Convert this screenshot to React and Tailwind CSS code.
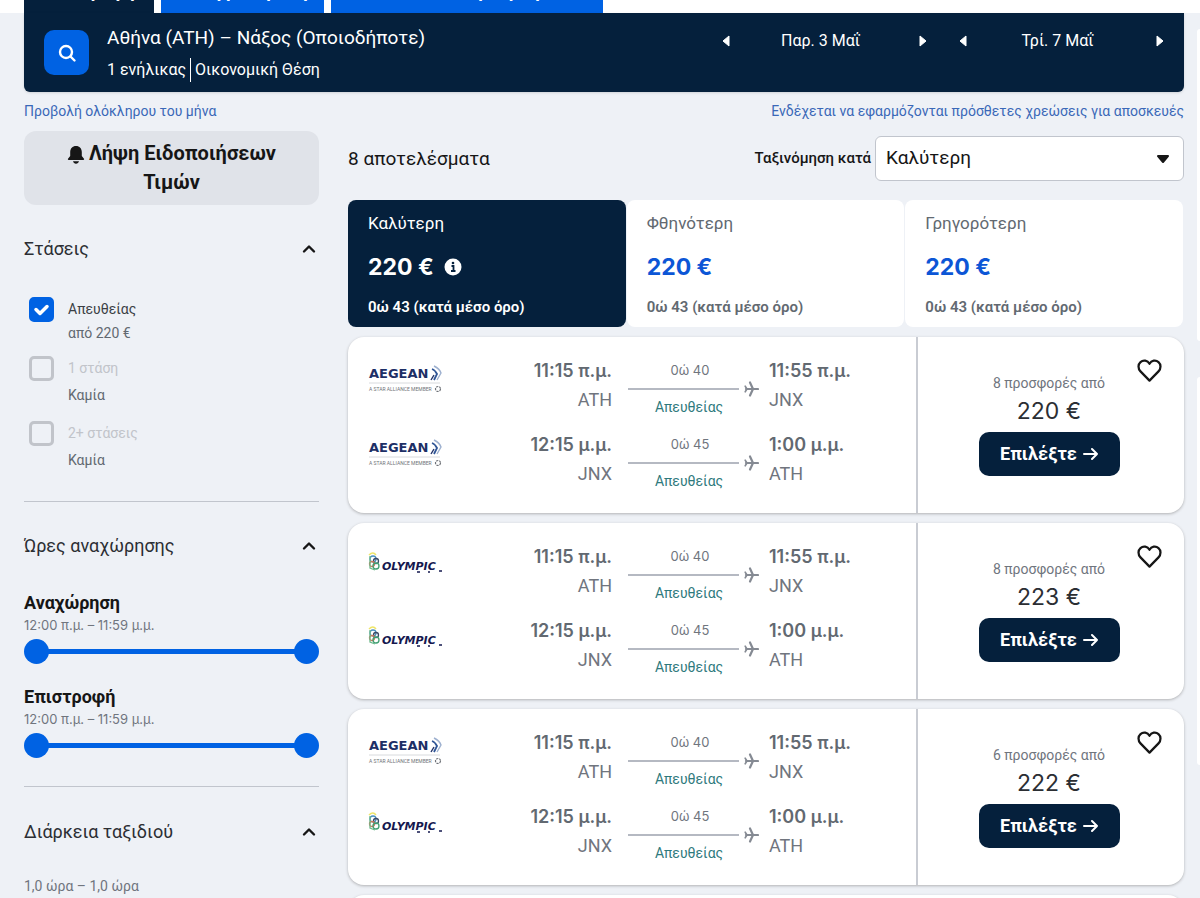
import React, { useState } from 'react';

const legs = {
    out: { depart: '11:15 π.μ.', from: 'ATH', duration: '0ώ 40', arrive: '11:55 π.μ.', to: 'JNX' },
    back: { depart: '12:15 μ.μ.', from: 'JNX', duration: '0ώ 45', arrive: '1:00 μ.μ.', to: 'ATH' },
};

const results = [
    { id: 1, airlines: ['aegean', 'aegean'], deals: '8 προσφορές από', price: '220 €' },
    { id: 2, airlines: ['olympic', 'olympic'], deals: '8 προσφορές από', price: '223 €' },
    { id: 3, airlines: ['aegean', 'olympic'], deals: '6 προσφορές από', price: '222 €' },
];

const sortTabs = ['Καλύτερη', 'Φθηνότερη', 'Γρηγορότερη'];

const stops = [
    { id: 'direct', label: 'Απευθείας', note: 'από 220 €' },
    { id: 'one', label: '1 στάση', note: 'Καμία', disabled: true },
    { id: 'two', label: '2+ στάσεις', note: 'Καμία', disabled: true },
];

const AegeanLogo = () => (
    <svg width="74" height="32" viewBox="0 0 74 32" role="img" aria-label="Aegean">
        <text x="1" y="14" fontSize="13" fontWeight="700" fill="#1d2f66" fontFamily="DejaVu Sans, sans-serif">AEGEAN</text>
        <path d="M66 2c4 2 6 4 7 7l-4 7" fill="none" stroke="#9db0cf" strokeWidth="1.4" />
        <path d="M64 5c3 1 4 3 5 5l-3 6" fill="none" stroke="#2f5596" strokeWidth="1.8" />
        <path d="m63 16 3-5" fill="none" stroke="#1d2f66" strokeWidth="1.4" />
        <path d="M1 19h71" stroke="#d8dadd" strokeWidth="1" />
        <text x="1" y="27" fontSize="5" fill="#6f7278" fontFamily="Roboto, sans-serif">A STAR ALLIANCE MEMBER</text>
        <circle cx="70" cy="25" r="2.500" fill="none" stroke="#6f7278" strokeWidth="1.2" strokeDasharray="2.200 1" />
    </svg>
);

const OlympicLogo = () => (
    <svg width="76" height="32" viewBox="0 0 76 32" role="img" aria-label="Olympic">
        <path d="M1 5q4-4 7 0" fill="none" stroke="#efe66a" strokeWidth="1.5" />
        <g fill="none" strokeWidth="1.3">
            <circle cx="5" cy="9" r="3" stroke="#4a8fc0" />
            <circle cx="8" cy="11" r="2.5" stroke="#3a4a66" />
            <circle cx="4" cy="14" r="2.5" stroke="#c9785c" />
            <circle cx="8" cy="16" r="3" stroke="#3f9f72" />
            <path d="M2 6v12l5 2" stroke="#6cb98b" />
        </g>
        <text x="14" y="20" fontSize="11" fontWeight="700" fontStyle="italic" fill="#15184f" fontFamily="DejaVu Sans, sans-serif">OLYMPIC</text>
        <path d="M49 22h3M60 22h2M71 21h3" stroke="#15184f" strokeWidth="1.3" />
    </svg>
);

const Bell = () => (
    <svg width="18" height="18" viewBox="0 0 18 18" className="mr-1 inline-block" fill="#161616" aria-hidden="true">
        <path d="M9 0C5.500 0 3.200 2.600 3.200 6v4L1 12.800c-.4.6 0 1.200.6 1.200h14.800c.6 0 1-.6.6-1.200L14.800 10V6c0-3.400-2.300-6-5.800-6zM6 15.200h6c-.4 1.600-1.500 2.500-3 2.500s-2.600-.9-3-2.500z" />
    </svg>
);

const Plane = () => (
    <svg width="15" height="16" viewBox="0 0 15 16" fill="none" stroke="#858a93" strokeLinecap="round" aria-hidden="true">
        <path d="M2 8h12" strokeWidth="2.2" />
        <path d="M9 8 6 1.500M9 8l-3 6.500" strokeWidth="2.200" />
        <path d="M3 8 1.200 5.200M3 8l-1.800 2.800" strokeWidth="1.6" />
    </svg>
);

const Chevron = () => (
    <svg width="14" height="10" viewBox="0 0 14 10" aria-hidden="true">
        <path d="M2 7.5 7 2.5l5 5" fill="none" stroke="#161616" strokeWidth="2.4" strokeLinecap="round" strokeLinejoin="round" />
    </svg>
);

const Arrow = ({ flip }) => (
    <svg width="8" height="12" viewBox="0 0 8 12" aria-hidden="true">
        <path d={flip ? 'M1 1v10l6-5z' : 'M7 1v10L1 6z'} fill="#fff" stroke="#fff" strokeLinejoin="round" />
    </svg>
);

const DatePicker = ({ date }) => (
    <div className="flex w-[205px] items-center justify-between">
        <button type="button" aria-label="Προηγούμενη ημέρα"><Arrow /></button>
        <span className="pr-2 text-base">{date}</span>
        <button type="button" aria-label="Επόμενη ημέρα"><Arrow flip /></button>
    </div>
);

const SectionTitle = ({ children }) => (
    <h2>
        <button type="button" className="flex w-full items-center justify-between pr-[3px] text-lg leading-6 text-[#2b2e33]">
            {children}
            <Chevron />
        </button>
    </h2>
);

const thumb =
    'pointer-events-none absolute inset-0 m-0 h-[25px] w-full appearance-none bg-transparent [&::-webkit-slider-thumb]:pointer-events-auto [&::-webkit-slider-thumb]:h-[25px] [&::-webkit-slider-thumb]:w-[25px] [&::-webkit-slider-thumb]:appearance-none [&::-webkit-slider-thumb]:rounded-full [&::-webkit-slider-thumb]:bg-[#0062e3]';

const TimeRange = ({ label }) => {
    const [from, setFrom] = useState(0);
    const [to, setTo] = useState(1439);

    return (
        <div>
            <h3 className="text-lg leading-6 font-bold text-[#161616]">{label}</h3>
            <p className="font-[Inter,sans-serif] text-[13px] leading-5 text-[#70757e]">12:00 π.μ. – 11:59 μ.μ.</p>
            <div className="relative mt-1 flex h-[25px] items-center">
                <div className="mx-3 h-[5px] flex-1 bg-[#0062e3]"></div>
                <input type="range" min="0" max="1439" value={from} onChange={(e) => setFrom(Number(e.target.value))} aria-label={`${label} από`} className={thumb} />
                <input type="range" min="0" max="1439" value={to} onChange={(e) => setTo(Number(e.target.value))} aria-label={`${label} έως`} className={thumb} />
            </div>
        </div>
    );
};

const Leg = ({ airline, leg }) => (
    <div className="flex h-[74px] items-start">
        <div className="flex-1 pt-[7px]">{airline === 'aegean' ? <AegeanLogo /> : <OlympicLogo />}</div>
        <div className="w-[100px] text-right">
            <p className="font-[Inter,sans-serif] text-lg leading-7 font-semibold text-[#626971]">{leg.depart}</p>
            <p className="text-lg leading-[30px] text-[#70757e]">{leg.from}</p>
        </div>
        <div className="ml-4 w-[131px]">
            <p className="w-[124px] text-center font-[Inter,sans-serif] text-[13px] leading-[26px] text-[#70757e]">{leg.duration}</p>
            <div className="flex h-3 items-center justify-between">
                <div className="h-[2px] w-[111px] bg-[#b5b9c2]"></div>
                <Plane />
            </div>
            <p className="w-[122px] text-center text-sm leading-6 text-[#2f7a7d]">Απευθείας</p>
        </div>
        <div className="ml-2.5 w-[147px]">
            <p className="font-[Inter,sans-serif] text-lg leading-7 font-semibold text-[#626971]">{leg.arrive}</p>
            <p className="text-lg leading-[30px] text-[#70757e]">{leg.to}</p>
        </div>
    </div>
);

const FlightCard = ({ result }) => (
    <li className="flex rounded-2xl bg-white shadow-[0_1px_3px_rgba(37,32,31,0.3)]">
        <div className="flex-1 pt-5 pb-2 pl-5">
            <Leg airline={result.airlines[0]} leg={legs.out} />
            <Leg airline={result.airlines[1]} leg={legs.back} />
        </div>
        <div className="relative flex w-[268px] flex-col items-center border-l-2 border-[#c9ccd3] pt-9 pr-1">
            <button type="button" aria-label="Αποθήκευση" className="absolute top-5 right-[21px]">
                <svg width="27" height="27" viewBox="0 0 24 24" fill="none" stroke="#161616" strokeWidth="2" strokeLinejoin="round" aria-hidden="true">
                    <path d="M12 21 4 12.800C1.600 10.300 1.700 6.500 4 4.500 6.500 2.300 10.200 3 12 6c1.800-3 5.500-3.700 8-1.500 2.300 2 2.400 5.800 0 8.300z" />
                </svg>
            </button>
            <p className="text-sm leading-5 text-[#70757e]">{result.deals}</p>
            <p className="font-[Inter,sans-serif] text-[23px] leading-9 text-[#2b2e33]">{result.price}</p>
            <button type="button" className="mt-[3px] flex h-[44px] w-[141px] items-center justify-center gap-1.5 rounded-[10px] bg-[#05203c] text-lg font-bold text-white">
                Επιλέξτε
                <svg width="15" height="14" viewBox="0 0 15 14" fill="none" stroke="#fff" strokeWidth="2" strokeLinecap="round" strokeLinejoin="round" aria-hidden="true">
                    <path d="M1 7h13M9 2l5 5-5 5" />
                </svg>
            </button>
        </div>
    </li>
);

const App = () => {
    const [active, setActive] = useState(0);
    const [sort, setSort] = useState('Καλύτερη');
    const [direct, setDirect] = useState(true);

    return (
        <div className="min-h-screen bg-[#eef1f6] font-[Roboto,sans-serif] text-[#161616]">
            <nav className="flex h-[13px] items-end gap-[7px] overflow-hidden bg-white px-6 text-lg font-bold text-white">
                <a href="#return" className="w-[130px] bg-[#05203c] px-2 pb-2 text-center">Επιστροφή</a>
                <a href="#oneway" className="w-[163px] bg-[#0062e3] px-2 pb-2 text-center">Απλή μετάβαση</a>
                <a href="#multi" className="w-[272px] bg-[#0062e3] px-2 pb-2 text-center">Πολλαπλοί προορισμοί</a>
            </nav>

            <div className="flex gap-[13px] pl-6">
                <div className="min-w-0 flex-1">
                    <header className="flex h-[79px] items-start rounded-b-md bg-[#05203c] px-5 text-white shadow-sm">
                        <button type="button" aria-label="Αναζήτηση" className="mt-[17px] flex h-[45px] w-[45px] items-center justify-center rounded-[10px] bg-[#0062e3]">
                            <svg width="20" height="20" viewBox="0 0 20 20" fill="none" stroke="#fff" strokeWidth="2.4" strokeLinecap="round" aria-hidden="true">
                                <circle cx="9" cy="9" r="6" />
                                <path d="m13.500 13.500 4 4" />
                            </svg>
                        </button>
                        <div className="ml-[18px] flex-1 pt-[11px]">
                            <h1 className="text-[19px] leading-7">Αθήνα (ATH) – Νάξος (Οποιοδήποτε)</h1>
                            <p className="mt-1.5 flex text-base leading-6">
                                <span className="border-r border-white pr-1">1 ενήλικας</span>
                                <span className="pl-1">Οικονομική Θέση</span>
                            </p>
                        </div>
                        <div className="flex gap-8 pt-4">
                            <DatePicker date="Παρ. 3 Μαΐ" />
                            <DatePicker date="Τρί. 7 Μαΐ" />
                        </div>
                    </header>

                    <div className="flex justify-between pt-[7px] pb-2 text-sm leading-6 text-[#3a68b8]">
                        <a href="#month">Προβολή ολόκληρου του μήνα</a>
                        <a href="#baggage">Ενδέχεται να εφαρμόζονται πρόσθετες χρεώσεις για αποσκευές</a>
                    </div>

                    <div className="flex gap-[29px]">
                        <aside className="w-[295px] shrink-0">
                            <button type="button" className="h-[74px] w-full rounded-xl bg-[#e0e3e9] px-8 text-xl leading-[29px] font-bold">
                                <Bell />
                                Λήψη Ειδοποιήσεων Τιμών
                            </button>

                            <section className="border-b border-[#c1c5cd] pt-8 pb-[15px]">
                                <SectionTitle>Στάσεις</SectionTitle>
                                <ul className="mt-9">
                                    {stops.map((stop) => (
                                        <li key={stop.id} className={stop.disabled ? 'pb-3.5' : 'pb-[11px]'}>
                                            <label className="flex gap-3.5 pl-[5px]">
                                                <span className="relative h-[25px] w-[25px] shrink-0">
                                                    <input
                                                        type="checkbox"
                                                        disabled={stop.disabled}
                                                        checked={!stop.disabled && direct}
                                                        onChange={(e) => setDirect(e.target.checked)}
                                                        className="block h-[25px] w-[25px] appearance-none rounded-[5px] border-[3px] border-[#c1c4ca] checked:border-[#0062e3] checked:bg-[#0062e3]"
                                                    />
                                                    {!stop.disabled && direct && (
                                                        <svg width="25" height="25" viewBox="0 0 25 25" className="pointer-events-none absolute inset-0" aria-hidden="true">
                                                            <path d="m7 12.500 4 4 7-7" fill="none" stroke="#fff" strokeWidth="3.500" strokeLinecap="round" strokeLinejoin="round" />
                                                        </svg>
                                                    )}
                                                </span>
                                                <span>
                                                    <span className={`block text-sm leading-6 ${stop.disabled ? 'text-[#c1c4ca]' : 'text-[#3b3f45]'}`}>{stop.label}</span>
                                                    <span className={`block text-sm leading-6 text-[#626971] ${stop.disabled ? 'pt-[3px]' : ''}`}>{stop.note}</span>
                                                </span>
                                            </label>
                                        </li>
                                    ))}
                                </ul>
                            </section>

                            <section className="border-b border-[#c1c5cd] pt-8 pb-7">
                                <SectionTitle>Ώρες αναχώρησης</SectionTitle>
                                <div className="mt-[33px] space-y-[21px]">
                                    <TimeRange label="Αναχώρηση" />
                                    <TimeRange label="Επιστροφή" />
                                </div>
                            </section>

                            <section className="pt-[33px]">
                                <SectionTitle>Διάρκεια ταξιδιού</SectionTitle>
                                <p className="mt-[30px] text-sm leading-6 text-[#70757e]">1,0 ώρα – 1,0 ώρα</p>
                            </section>
                        </aside>

                        <main className="min-w-0 flex-1">
                            <div className="flex items-center justify-between pt-[5px]">
                                <p className="text-[19px] leading-6">8 αποτελέσματα</p>
                                <div className="flex items-center gap-1">
                                    <label htmlFor="sort" className="text-[15px] font-medium">Ταξινόμηση κατά</label>
                                    <div className="relative">
                                        <select id="sort" value={sort} onChange={(e) => setSort(e.target.value)} className="block h-[45px] w-[309px] appearance-none rounded-md border border-[#c1c5cd] bg-white px-2.5 text-[19px]">
                                            {sortTabs.map((tab) => <option key={tab}>{tab}</option>)}
                                        </select>
                                        <svg width="14" height="10" viewBox="0 0 14 10" className="pointer-events-none absolute top-[18px] right-3.5" aria-hidden="true">
                                            <path d="M2 2h10L7 8z" fill="#161616" stroke="#161616" strokeWidth="2" strokeLinejoin="round" />
                                        </svg>
                                    </div>
                                </div>
                            </div>

                            <div className="mt-[19px] grid grid-cols-3 gap-px pr-px">
                                {sortTabs.map((tab, i) => (
                                    <button
                                        key={tab}
                                        type="button"
                                        onClick={() => setActive(i)}
                                        className={`h-[127px] rounded-lg px-5 text-left ${active === i ? 'bg-[#05203c] text-white' : 'bg-white text-[#626971]'}`}
                                    >
                                        <span className="block text-[17px] leading-6">{tab}</span>
                                        <span className={`mt-4 flex items-center gap-2.5 font-[Inter,sans-serif] text-[23px] leading-8 font-bold ${active === i ? '' : 'text-[#0c56d6]'}`}>
                                            220 €
                                            {active === i && (
                                                <svg width="18" height="18" viewBox="0 0 18 18" aria-hidden="true">
                                                    <circle cx="9" cy="9" r="8.500" fill="#fff" />
                                                    <path d="M7.500 8h2v5M7 13h4.500" fill="none" stroke="#05203c" strokeWidth="1.800" />
                                                    <circle cx="9" cy="5" r="1.300" fill="#05203c" />
                                                </svg>
                                            )}
                                        </span>
                                        <span className="mt-3.5 block text-[15px] leading-5 font-semibold">0ώ 43 (κατά μέσο όρο)</span>
                                    </button>
                                ))}
                            </div>

                            <ul className="mt-2.5 space-y-2.5">
                                {results.map((result) => <FlightCard key={result.id} result={result} />)}
                                {/* next result, still loading */}
                                <li aria-hidden="true" className="h-44 rounded-2xl bg-white shadow-[0_1px_3px_rgba(37,32,31,0.3)]"></li>
                            </ul>
                        </main>
                    </div>
                </div>

                {/* ad rail */}
                <div className="w-[3px] shrink-0 space-y-9 pt-4">
                    <div className="h-[312px] rounded-l-sm bg-white"></div>
                    <div className="h-[388px] rounded-l-sm bg-white"></div>
                </div>
            </div>
        </div>
    );
};

export default App;
